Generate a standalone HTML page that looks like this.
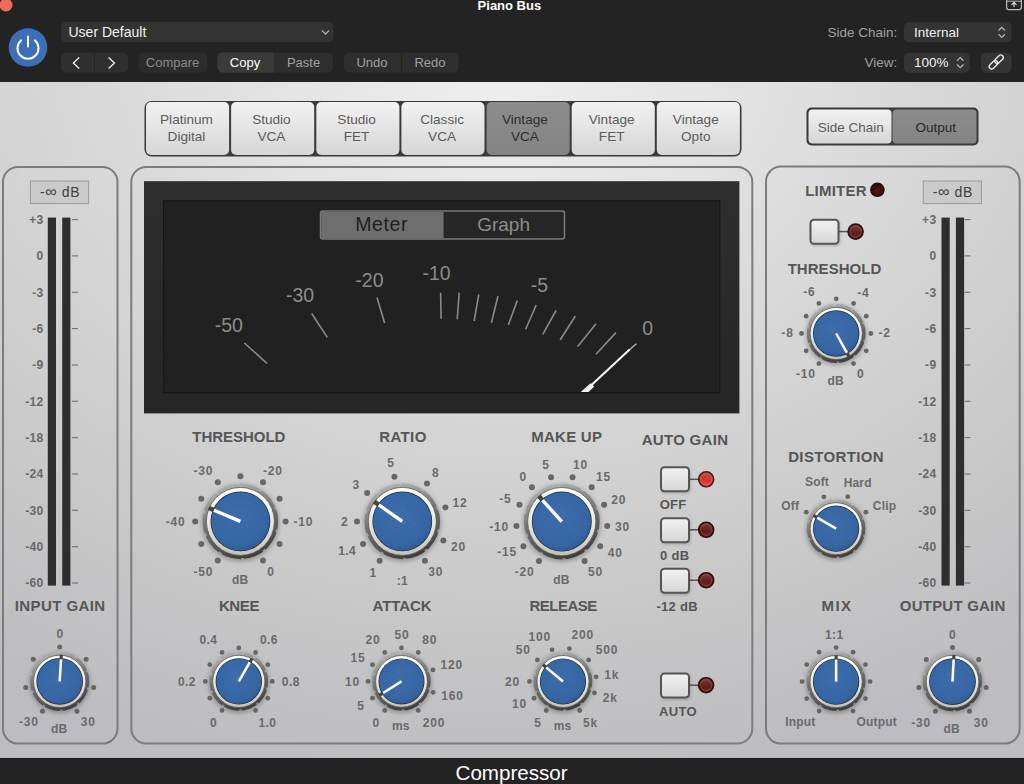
<!DOCTYPE html>
<html><head><meta charset="utf-8"><style>
html,body{margin:0;padding:0;background:#232323;width:1024px;height:784px;overflow:hidden;}
svg{display:block;font-family:"Liberation Sans",sans-serif;}
</style></head><body>
<svg width="1024" height="784" viewBox="0 0 1024 784" font-family="Liberation Sans, sans-serif">
<defs>
<radialGradient id="bgG" gradientUnits="userSpaceOnUse" cx="0" cy="0" r="1" gradientTransform="translate(500 50) scale(920 730)">
 <stop offset="0" stop-color="#f0f0f0"/><stop offset="0.2" stop-color="#e6e6e6"/><stop offset="0.5" stop-color="#d6d6d6"/><stop offset="0.75" stop-color="#c9c9c9"/><stop offset="1" stop-color="#bdbdc1"/>
</radialGradient>
<radialGradient id="blueG" cx="0.45" cy="0.4" r="0.65">
 <stop offset="0" stop-color="#3d6fb0"/><stop offset="0.8" stop-color="#3666a6"/><stop offset="1" stop-color="#2b5490"/>
</radialGradient>
<linearGradient id="ringG" x1="0" y1="0" x2="0" y2="1">
 <stop offset="0" stop-color="#fdfdf8"/><stop offset="0.5" stop-color="#eceade"/><stop offset="1" stop-color="#c4c2b6"/>
</linearGradient>
<linearGradient id="darkRingG" x1="0.3" y1="0" x2="0.6" y2="1">
 <stop offset="0" stop-color="#b4b4b4"/><stop offset="0.45" stop-color="#747474"/><stop offset="1" stop-color="#3c3c3c"/>
</linearGradient>
<filter id="blur2" x="-50%" y="-50%" width="200%" height="200%"><feGaussianBlur stdDeviation="2"/></filter>
<filter id="noise" x="0" y="0" width="100%" height="100%">
 <feTurbulence type="fractalNoise" baseFrequency="0.55" numOctaves="2" seed="3" result="n"/>
 <feColorMatrix in="n" type="matrix" values="0 0 0 0 0.05  0 0 0 0 0.12  0 0 0 0 0.25  0 0 0 -1.2 0.72" result="na"/>
 <feComposite in="na" in2="SourceGraphic" operator="in" result="nc"/>
 <feMerge><feMergeNode in="SourceGraphic"/><feMergeNode in="nc"/></feMerge>
</filter>
<filter id="blur1" x="-50%" y="-50%" width="200%" height="200%"><feGaussianBlur stdDeviation="0.8"/></filter>
<linearGradient id="btnG" x1="0" y1="0" x2="0" y2="1">
 <stop offset="0" stop-color="#f2f2f2"/><stop offset="1" stop-color="#d6d6d6"/>
</linearGradient>
<linearGradient id="btnSelG" x1="0" y1="0" x2="0" y2="1">
 <stop offset="0" stop-color="#8c8c8c"/><stop offset="1" stop-color="#848484"/>
</linearGradient>
<linearGradient id="ledOn" x1="0" y1="0" x2="0" y2="1">
 <stop offset="0" stop-color="#b24440"/><stop offset="0.6" stop-color="#d8362c"/><stop offset="1" stop-color="#e85046"/>
</linearGradient>
<linearGradient id="ledOff" x1="0" y1="0" x2="0" y2="1">
 <stop offset="0" stop-color="#7a3c3a"/><stop offset="0.6" stop-color="#641c1a"/><stop offset="1" stop-color="#6e2422"/>
</linearGradient>
<radialGradient id="ledDark" cx="0.5" cy="0.6" r="0.6">
 <stop offset="0" stop-color="#5a1412"/><stop offset="1" stop-color="#2a0c0c"/>
</radialGradient>
<linearGradient id="dispG" x1="0" y1="0" x2="0" y2="1">
 <stop offset="0" stop-color="#2e2e2e"/><stop offset="1" stop-color="#262626"/>
</linearGradient>
</defs>

<rect x="0" y="82" width="1024" height="676" fill="url(#bgG)"/>
<rect x="0" y="0" width="1024" height="82" fill="#232323"/>
<rect x="0" y="758" width="1024" height="26" fill="#232323"/><rect x="0" y="758" width="1024" height="1" fill="#1a1a1a"/>
<text x="511.6" y="780.3" font-size="20.6" fill="#ffffff" font-weight="normal" text-anchor="middle" letter-spacing="0" >Compressor</text>
<circle cx="6" cy="5" r="6.5" fill="#ec6a5e"/>
<text x="509.4" y="9.8" font-size="13" fill="#ffffff" font-weight="bold" text-anchor="middle" letter-spacing="0" >Piano Bus</text>
<circle cx="28" cy="47.5" r="19.3" fill="#3d6fb8"/>
<path d="M21.2 40.3 A10.5 10.5 0 1 0 34.8 40.3" fill="none" stroke="#fff" stroke-width="2" stroke-linecap="round"/>
<line x1="28" y1="36.5" x2="28" y2="46.5" stroke="#fff" stroke-width="2" stroke-linecap="round"/>
<rect x="61" y="22" width="272.5" height="20" rx="5" fill="#333333"/>
<text x="68.5" y="37.0" font-size="14" fill="#f0f0f0" font-weight="normal" text-anchor="start" letter-spacing="0" >User Default</text>
<path d="M322 30.5 L325.5 34 L329 30.5" fill="none" stroke="#aaa" stroke-width="1.3"/>
<rect x="61" y="52.5" width="67" height="20" rx="5" fill="#2f2f2f"/>
<line x1="94.5" y1="52.5" x2="94.5" y2="72.5" stroke="#242424" stroke-width="1"/>
<path d="M79.2 57.6 L73.4 63.1 L79.2 68.6" fill="none" stroke="#e8e8e8" stroke-width="1.4"/>
<path d="M108.6 57.6 L114.4 63.1 L108.6 68.6" fill="none" stroke="#e8e8e8" stroke-width="1.4"/>
<rect x="138.5" y="52.5" width="68.5" height="20" rx="5" fill="#2c2c2c"/>
<text x="172.5" y="67.0" font-size="13" fill="#8a8a8a" font-weight="normal" text-anchor="middle" letter-spacing="0" >Compare</text>
<rect x="217.5" y="52.5" width="115.5" height="20" rx="5" fill="#2e2e2e"/>
<path d="M222.5 52.5 H274 V72.5 H222.5 A5 5 0 0 1 217.5 67.5 V57.5 A5 5 0 0 1 222.5 52.5Z" fill="#3a3a3a"/>
<text x="245.0" y="67.0" font-size="13" fill="#ffffff" font-weight="normal" text-anchor="middle" letter-spacing="0" >Copy</text>
<text x="303.5" y="67.0" font-size="13" fill="#a0a0a0" font-weight="normal" text-anchor="middle" letter-spacing="0" >Paste</text>
<rect x="344" y="52.5" width="114.5" height="20" rx="5" fill="#2e2e2e"/>
<line x1="401.5" y1="52.5" x2="401.5" y2="72.5" stroke="#242424" stroke-width="1"/>
<text x="372.0" y="67.0" font-size="13" fill="#a0a0a0" font-weight="normal" text-anchor="middle" letter-spacing="0" >Undo</text>
<text x="430.0" y="67.0" font-size="13" fill="#a0a0a0" font-weight="normal" text-anchor="middle" letter-spacing="0" >Redo</text>
<text x="897.3" y="37.0" font-size="13.5" fill="#a0a0a0" font-weight="normal" text-anchor="end" letter-spacing="0" >Side Chain:</text>
<rect x="904" y="22.3" width="107.6" height="20" rx="5" fill="#343434"/>
<text x="914.0" y="37.0" font-size="13.5" fill="#f0f0f0" font-weight="normal" text-anchor="start" letter-spacing="0" >Internal</text>
<path d="M998.5 30.5 L1001.7 27.3 L1005 30.5 M998.5 34.2 L1001.7 37.4 L1005 34.2" fill="none" stroke="#bbb" stroke-width="1.2"/>
<text x="897.3" y="67.0" font-size="13.5" fill="#a0a0a0" font-weight="normal" text-anchor="end" letter-spacing="0" >View:</text>
<rect x="904" y="52.8" width="65.8" height="20" rx="5" fill="#343434"/>
<text x="914.0" y="67.0" font-size="13.5" fill="#f0f0f0" font-weight="normal" text-anchor="start" letter-spacing="0" >100%</text>
<path d="M957 60.8 L960.2 57.6 L963.5 60.8 M957 64.5 L960.2 67.7 L963.5 64.5" fill="none" stroke="#bbb" stroke-width="1.2"/>
<rect x="981" y="52.8" width="30.6" height="20" rx="5" fill="#343434"/>
<g fill="none" stroke="#e8e8e8" stroke-width="1.4"><rect x="988.5" y="62.3" width="10" height="5" rx="2.5" transform="rotate(-45 993.5 64.8)"/><rect x="994" y="56.8" width="10" height="5" rx="2.5" transform="rotate(-45 999 59.3)"/></g>
<rect x="1006.6" y="-3" width="14.8" height="12.6" rx="2" fill="none" stroke="#bbb" stroke-width="1.2"/>
<line x1="1006.6" y1="1.2" x2="1021.4" y2="1.2" stroke="#bbb" stroke-width="1"/>
<path d="M1014 7 V2.5 M1011.5 4.8 L1014 2.3 L1016.5 4.8" fill="none" stroke="#ddd" stroke-width="1.2"/>
<rect x="3" y="167" width="114.5" height="576.6" rx="15" fill="none" stroke="#7c7c7c" stroke-width="2"/>
<rect x="131.3" y="167" width="621" height="576.5" rx="15" fill="none" stroke="#7c7c7c" stroke-width="2"/>
<rect x="766" y="166.6" width="253.7" height="577" rx="15" fill="none" stroke="#7c7c7c" stroke-width="2"/>
<rect x="144.5" y="101" width="597" height="55.5" rx="7" fill="#3a3a3a"/>
<rect x="146.0" y="102" width="83.1" height="53" rx="5" fill="url(#btnG)"/>
<text x="186.5" y="123.7" font-size="13.6" fill="#5c5c5c" font-weight="normal" text-anchor="middle" letter-spacing="0" >Platinum</text>
<text x="186.5" y="141.1" font-size="13.6" fill="#5c5c5c" font-weight="normal" text-anchor="middle" letter-spacing="0" >Digital</text>
<rect x="231.1" y="102" width="83.1" height="53" rx="5" fill="url(#btnG)"/>
<text x="271.4" y="123.7" font-size="13.6" fill="#5c5c5c" font-weight="normal" text-anchor="middle" letter-spacing="0" >Studio</text>
<text x="271.4" y="141.1" font-size="13.6" fill="#5c5c5c" font-weight="normal" text-anchor="middle" letter-spacing="0" >VCA</text>
<rect x="316.3" y="102" width="83.1" height="53" rx="5" fill="url(#btnG)"/>
<text x="356.6" y="123.7" font-size="13.6" fill="#5c5c5c" font-weight="normal" text-anchor="middle" letter-spacing="0" >Studio</text>
<text x="356.6" y="141.1" font-size="13.6" fill="#5c5c5c" font-weight="normal" text-anchor="middle" letter-spacing="0" >FET</text>
<rect x="401.4" y="102" width="83.1" height="53" rx="5" fill="url(#btnG)"/>
<text x="442.1" y="123.7" font-size="13.6" fill="#5c5c5c" font-weight="normal" text-anchor="middle" letter-spacing="0" >Classic</text>
<text x="442.1" y="141.1" font-size="13.6" fill="#5c5c5c" font-weight="normal" text-anchor="middle" letter-spacing="0" >VCA</text>
<rect x="486.6" y="102" width="83.1" height="53" rx="5" fill="url(#btnSelG)"/>
<text x="524.9" y="123.7" font-size="13.6" fill="#2e2e2e" font-weight="normal" text-anchor="middle" letter-spacing="0" >Vintage</text>
<text x="524.9" y="141.1" font-size="13.6" fill="#2e2e2e" font-weight="normal" text-anchor="middle" letter-spacing="0" >VCA</text>
<rect x="571.7" y="102" width="83.1" height="53" rx="5" fill="url(#btnG)"/>
<text x="611.7" y="123.7" font-size="13.6" fill="#5c5c5c" font-weight="normal" text-anchor="middle" letter-spacing="0" >Vintage</text>
<text x="611.7" y="141.1" font-size="13.6" fill="#5c5c5c" font-weight="normal" text-anchor="middle" letter-spacing="0" >FET</text>
<rect x="656.8" y="102" width="83.1" height="53" rx="5" fill="url(#btnG)"/>
<text x="695.8" y="123.7" font-size="13.6" fill="#5c5c5c" font-weight="normal" text-anchor="middle" letter-spacing="0" >Vintage</text>
<text x="695.8" y="141.1" font-size="13.6" fill="#5c5c5c" font-weight="normal" text-anchor="middle" letter-spacing="0" >Opto</text>
<rect x="806.5" y="107.5" width="172" height="38" rx="5" fill="#3a3a3a"/>
<rect x="808.5" y="109.5" width="83" height="34" rx="4" fill="url(#btnG)"/>
<rect x="892.5" y="109.5" width="84" height="34" rx="4" fill="url(#btnSelG)"/>
<text x="850.8" y="132.0" font-size="13.5" fill="#5c5c5c" font-weight="normal" text-anchor="middle" letter-spacing="0" >Side Chain</text>
<text x="935.8" y="132.0" font-size="13.5" fill="#2a2a2a" font-weight="normal" text-anchor="middle" letter-spacing="0" >Output</text>
<rect x="30.4" y="181" width="58.199999999999996" height="22.6" fill="#cacaca" stroke="#9a9a9a" stroke-width="1"/>
<text x="60.1" y="197.0" font-size="14" fill="#3e3e3e" font-weight="normal" text-anchor="middle" letter-spacing="0.6" >-<tspan font-size="16">∞</tspan> dB</text>
<rect x="47.8" y="217.6" width="8.2" height="368" fill="#2e2e2e"/>
<rect x="62.2" y="217.6" width="8.2" height="368" fill="#2e2e2e"/>
<line x1="72" y1="219.6" x2="78" y2="219.6" stroke="#777" stroke-width="1.2"/>
<text x="43.5" y="224.0" font-size="12" fill="#686868" font-weight="bold" text-anchor="end" letter-spacing="0.3" >+3</text>
<line x1="72" y1="255.9" x2="78" y2="255.9" stroke="#777" stroke-width="1.2"/>
<text x="43.5" y="260.3" font-size="12" fill="#686868" font-weight="bold" text-anchor="end" letter-spacing="0.3" >0</text>
<line x1="72" y1="292.3" x2="78" y2="292.3" stroke="#777" stroke-width="1.2"/>
<text x="43.5" y="296.7" font-size="12" fill="#686868" font-weight="bold" text-anchor="end" letter-spacing="0.3" >-3</text>
<line x1="72" y1="328.6" x2="78" y2="328.6" stroke="#777" stroke-width="1.2"/>
<text x="43.5" y="333.0" font-size="12" fill="#686868" font-weight="bold" text-anchor="end" letter-spacing="0.3" >-6</text>
<line x1="72" y1="365.0" x2="78" y2="365.0" stroke="#777" stroke-width="1.2"/>
<text x="43.5" y="369.4" font-size="12" fill="#686868" font-weight="bold" text-anchor="end" letter-spacing="0.3" >-9</text>
<line x1="72" y1="401.3" x2="78" y2="401.3" stroke="#777" stroke-width="1.2"/>
<text x="43.5" y="405.7" font-size="12" fill="#686868" font-weight="bold" text-anchor="end" letter-spacing="0.3" >-12</text>
<line x1="72" y1="437.6" x2="78" y2="437.6" stroke="#777" stroke-width="1.2"/>
<text x="43.5" y="442.0" font-size="12" fill="#686868" font-weight="bold" text-anchor="end" letter-spacing="0.3" >-18</text>
<line x1="72" y1="474.0" x2="78" y2="474.0" stroke="#777" stroke-width="1.2"/>
<text x="43.5" y="478.4" font-size="12" fill="#686868" font-weight="bold" text-anchor="end" letter-spacing="0.3" >-24</text>
<line x1="72" y1="510.3" x2="78" y2="510.3" stroke="#777" stroke-width="1.2"/>
<text x="43.5" y="514.7" font-size="12" fill="#686868" font-weight="bold" text-anchor="end" letter-spacing="0.3" >-30</text>
<line x1="72" y1="546.7" x2="78" y2="546.7" stroke="#777" stroke-width="1.2"/>
<text x="43.5" y="551.1" font-size="12" fill="#686868" font-weight="bold" text-anchor="end" letter-spacing="0.3" >-40</text>
<line x1="72" y1="583.0" x2="78" y2="583.0" stroke="#777" stroke-width="1.2"/>
<text x="43.5" y="587.4" font-size="12" fill="#686868" font-weight="bold" text-anchor="end" letter-spacing="0.3" >-60</text>
<rect x="923.2" y="181" width="58.19999999999993" height="22.6" fill="#cacaca" stroke="#9a9a9a" stroke-width="1"/>
<text x="952.9" y="197.0" font-size="14" fill="#3e3e3e" font-weight="normal" text-anchor="middle" letter-spacing="0.6" >-<tspan font-size="16">∞</tspan> dB</text>
<rect x="941.5" y="217.6" width="8.2" height="368" fill="#2e2e2e"/>
<rect x="955.9" y="217.6" width="8.2" height="368" fill="#2e2e2e"/>
<line x1="964.6" y1="219.6" x2="970.4" y2="219.6" stroke="#777" stroke-width="1.2"/>
<text x="936.4" y="224.0" font-size="12" fill="#686868" font-weight="bold" text-anchor="end" letter-spacing="0.3" >+3</text>
<line x1="964.6" y1="255.9" x2="970.4" y2="255.9" stroke="#777" stroke-width="1.2"/>
<text x="936.4" y="260.3" font-size="12" fill="#686868" font-weight="bold" text-anchor="end" letter-spacing="0.3" >0</text>
<line x1="964.6" y1="292.3" x2="970.4" y2="292.3" stroke="#777" stroke-width="1.2"/>
<text x="936.4" y="296.7" font-size="12" fill="#686868" font-weight="bold" text-anchor="end" letter-spacing="0.3" >-3</text>
<line x1="964.6" y1="328.6" x2="970.4" y2="328.6" stroke="#777" stroke-width="1.2"/>
<text x="936.4" y="333.0" font-size="12" fill="#686868" font-weight="bold" text-anchor="end" letter-spacing="0.3" >-6</text>
<line x1="964.6" y1="365.0" x2="970.4" y2="365.0" stroke="#777" stroke-width="1.2"/>
<text x="936.4" y="369.4" font-size="12" fill="#686868" font-weight="bold" text-anchor="end" letter-spacing="0.3" >-9</text>
<line x1="964.6" y1="401.3" x2="970.4" y2="401.3" stroke="#777" stroke-width="1.2"/>
<text x="936.4" y="405.7" font-size="12" fill="#686868" font-weight="bold" text-anchor="end" letter-spacing="0.3" >-12</text>
<line x1="964.6" y1="437.6" x2="970.4" y2="437.6" stroke="#777" stroke-width="1.2"/>
<text x="936.4" y="442.0" font-size="12" fill="#686868" font-weight="bold" text-anchor="end" letter-spacing="0.3" >-18</text>
<line x1="964.6" y1="474.0" x2="970.4" y2="474.0" stroke="#777" stroke-width="1.2"/>
<text x="936.4" y="478.4" font-size="12" fill="#686868" font-weight="bold" text-anchor="end" letter-spacing="0.3" >-24</text>
<line x1="964.6" y1="510.3" x2="970.4" y2="510.3" stroke="#777" stroke-width="1.2"/>
<text x="936.4" y="514.7" font-size="12" fill="#686868" font-weight="bold" text-anchor="end" letter-spacing="0.3" >-30</text>
<line x1="964.6" y1="546.7" x2="970.4" y2="546.7" stroke="#777" stroke-width="1.2"/>
<text x="936.4" y="551.1" font-size="12" fill="#686868" font-weight="bold" text-anchor="end" letter-spacing="0.3" >-40</text>
<line x1="964.6" y1="583.0" x2="970.4" y2="583.0" stroke="#777" stroke-width="1.2"/>
<text x="936.4" y="587.4" font-size="12" fill="#686868" font-weight="bold" text-anchor="end" letter-spacing="0.3" >-60</text>
<text x="60.2" y="611.4" font-size="15" fill="#565656" font-weight="bold" text-anchor="middle" letter-spacing="0.41" >INPUT GAIN</text>
<text x="238.9" y="442.4" font-size="15" fill="#565656" font-weight="bold" text-anchor="middle" letter-spacing="-0.03" >THRESHOLD</text>
<text x="403.0" y="442.4" font-size="15" fill="#565656" font-weight="bold" text-anchor="middle" letter-spacing="0.35" >RATIO</text>
<text x="566.7" y="441.8" font-size="15" fill="#565656" font-weight="bold" text-anchor="middle" letter-spacing="0.25" >MAKE UP</text>
<text x="685.0" y="444.7" font-size="15" fill="#565656" font-weight="bold" text-anchor="middle" letter-spacing="0.31" >AUTO GAIN</text>
<text x="239.0" y="611.2" font-size="15" fill="#565656" font-weight="bold" text-anchor="middle" letter-spacing="-0.38" >KNEE</text>
<text x="402.0" y="611.2" font-size="15" fill="#565656" font-weight="bold" text-anchor="middle" letter-spacing="-0.07" >ATTACK</text>
<text x="563.2" y="611.2" font-size="15" fill="#565656" font-weight="bold" text-anchor="middle" letter-spacing="-0.5" >RELEASE</text>
<text x="834.5" y="274.0" font-size="15" fill="#565656" font-weight="bold" text-anchor="middle" letter-spacing="0.04" >THRESHOLD</text>
<text x="836.1" y="462.1" font-size="15" fill="#565656" font-weight="bold" text-anchor="middle" letter-spacing="0.36" >DISTORTION</text>
<text x="837.0" y="611.2" font-size="15" fill="#565656" font-weight="bold" text-anchor="middle" letter-spacing="1.5" >MIX</text>
<text x="952.7" y="611.2" font-size="15" fill="#565656" font-weight="bold" text-anchor="middle" letter-spacing="0.22" >OUTPUT GAIN</text>
<text x="836.0" y="196.0" font-size="15" fill="#565656" font-weight="bold" text-anchor="middle" letter-spacing="0.25" >LIMITER</text>
<circle cx="42.45" cy="711.28" r="2.5" fill="#676767"/>
<circle cx="25.72" cy="687.39" r="2.5" fill="#676767"/>
<circle cx="33.27" cy="659.22" r="2.5" fill="#676767"/>
<circle cx="59.70" cy="646.90" r="2.5" fill="#676767"/>
<circle cx="86.13" cy="659.22" r="2.5" fill="#676767"/>
<circle cx="93.68" cy="687.39" r="2.5" fill="#676767"/>
<circle cx="76.95" cy="711.28" r="2.5" fill="#676767"/>
<circle cx="59.7" cy="682.9" r="30.5" fill="#3a3a3a" opacity="0.35" filter="url(#blur2)"/>
<circle cx="59.7" cy="681.4" r="29.5" fill="url(#darkRingG)"/>
<circle cx="59.7" cy="681.4" r="28.90" fill="none" stroke="#c8c8c8" stroke-opacity="0.55" stroke-width="1.4" stroke-dasharray="2.54 15.62" transform="rotate(12 59.7 681.4)"/>
<circle cx="59.7" cy="681.4" r="26.200000000000003" fill="url(#ringG)" stroke="#5a5a5a" stroke-width="0.8"/>
<circle cx="59.7" cy="681.4" r="23.3" fill="#1a2c48"/>
<circle cx="59.7" cy="681.4" r="22.6" fill="url(#blueG)" filter="url(#noise)"/>
<line x1="59.70" y1="681.40" x2="61.08" y2="658.84" stroke="#ffffff" stroke-width="2.5"/>
<line x1="61.05" y1="659.34" x2="61.32" y2="654.95" stroke="#444444" stroke-width="3.2"/>
<text x="60.2" y="638.1" font-size="12" fill="#6a6a6a" font-weight="bold" text-anchor="middle" letter-spacing="0.8" >0</text>
<text x="28.9" y="726.1" font-size="12" fill="#6a6a6a" font-weight="bold" text-anchor="middle" letter-spacing="0.8" >-30</text>
<text x="59.3" y="733.1" font-size="12" fill="#6a6a6a" font-weight="bold" text-anchor="middle" letter-spacing="0.2" >dB</text>
<text x="88.3" y="726.1" font-size="12" fill="#6a6a6a" font-weight="bold" text-anchor="middle" letter-spacing="0.8" >30</text>
<circle cx="217.80" cy="560.54" r="3" fill="#676767"/>
<circle cx="201.26" cy="544.00" r="3" fill="#676767"/>
<circle cx="195.20" cy="521.40" r="3" fill="#676767"/>
<circle cx="201.26" cy="498.80" r="3" fill="#676767"/>
<circle cx="217.80" cy="482.26" r="3" fill="#676767"/>
<circle cx="240.40" cy="476.20" r="3" fill="#676767"/>
<circle cx="263.00" cy="482.26" r="3" fill="#676767"/>
<circle cx="279.54" cy="498.80" r="3" fill="#676767"/>
<circle cx="285.60" cy="521.40" r="3" fill="#676767"/>
<circle cx="279.54" cy="544.00" r="3" fill="#676767"/>
<circle cx="263.00" cy="560.54" r="3" fill="#676767"/>
<circle cx="240.4" cy="522.9" r="38.8" fill="#3a3a3a" opacity="0.35" filter="url(#blur2)"/>
<circle cx="240.4" cy="521.4" r="37.8" fill="url(#darkRingG)"/>
<circle cx="240.4" cy="521.4" r="37.20" fill="none" stroke="#c8c8c8" stroke-opacity="0.55" stroke-width="1.4" stroke-dasharray="3.27 20.10" transform="rotate(12 240.4 521.4)"/>
<circle cx="240.4" cy="521.4" r="34.0" fill="url(#ringG)" stroke="#5a5a5a" stroke-width="0.8"/>
<circle cx="240.4" cy="521.4" r="29.9" fill="#1a2c48"/>
<circle cx="240.4" cy="521.4" r="29.2" fill="url(#blueG)" filter="url(#noise)"/>
<line x1="240.40" y1="521.40" x2="213.52" y2="509.99" stroke="#ffffff" stroke-width="3.4"/>
<line x1="213.98" y1="510.19" x2="208.83" y2="508.00" stroke="#444444" stroke-width="4.6"/>
<text x="203.3" y="474.8" font-size="12" fill="#6a6a6a" font-weight="bold" text-anchor="middle" letter-spacing="0.8" >-30</text>
<text x="272.9" y="474.8" font-size="12" fill="#6a6a6a" font-weight="bold" text-anchor="middle" letter-spacing="0.8" >-20</text>
<text x="175.6" y="526.1" font-size="12" fill="#6a6a6a" font-weight="bold" text-anchor="middle" letter-spacing="0.8" >-40</text>
<text x="303.3" y="526.1" font-size="12" fill="#6a6a6a" font-weight="bold" text-anchor="middle" letter-spacing="0.8" >-10</text>
<text x="203.3" y="576.1" font-size="12" fill="#6a6a6a" font-weight="bold" text-anchor="middle" letter-spacing="0.8" >-50</text>
<text x="271.1" y="576.1" font-size="12" fill="#6a6a6a" font-weight="bold" text-anchor="middle" letter-spacing="0.8" >0</text>
<text x="240.1" y="584.1" font-size="12" fill="#6a6a6a" font-weight="bold" text-anchor="middle" letter-spacing="0.2" >dB</text>
<circle cx="379.65" cy="560.63" r="3" fill="#676767"/>
<circle cx="363.07" cy="544.05" r="3" fill="#676767"/>
<circle cx="357.00" cy="521.40" r="3" fill="#676767"/>
<circle cx="367.10" cy="492.89" r="3" fill="#676767"/>
<circle cx="394.43" cy="476.79" r="3" fill="#676767"/>
<circle cx="426.97" cy="483.41" r="3" fill="#676767"/>
<circle cx="445.38" cy="507.40" r="3" fill="#676767"/>
<circle cx="443.36" cy="540.54" r="3" fill="#676767"/>
<circle cx="424.95" cy="560.63" r="3" fill="#676767"/>
<circle cx="402.3" cy="522.9" r="38.8" fill="#3a3a3a" opacity="0.35" filter="url(#blur2)"/>
<circle cx="402.3" cy="521.4" r="37.8" fill="url(#darkRingG)"/>
<circle cx="402.3" cy="521.4" r="37.20" fill="none" stroke="#c8c8c8" stroke-opacity="0.55" stroke-width="1.4" stroke-dasharray="3.27 20.10" transform="rotate(12 402.3 521.4)"/>
<circle cx="402.3" cy="521.4" r="34.0" fill="url(#ringG)" stroke="#5a5a5a" stroke-width="0.8"/>
<circle cx="402.3" cy="521.4" r="29.9" fill="#1a2c48"/>
<circle cx="402.3" cy="521.4" r="29.2" fill="url(#blueG)" filter="url(#noise)"/>
<line x1="402.30" y1="521.40" x2="378.38" y2="504.65" stroke="#ffffff" stroke-width="3.4"/>
<line x1="378.79" y1="504.94" x2="374.20" y2="501.73" stroke="#444444" stroke-width="4.6"/>
<text x="373.3" y="576.6" font-size="12" fill="#6a6a6a" font-weight="bold" text-anchor="middle" letter-spacing="0.8" >1</text>
<text x="347.2" y="555.2" font-size="12" fill="#6a6a6a" font-weight="bold" text-anchor="middle" letter-spacing="0.4" >1.4</text>
<text x="344.7" y="525.7" font-size="12" fill="#6a6a6a" font-weight="bold" text-anchor="middle" letter-spacing="0.8" >2</text>
<text x="356.3" y="489.1" font-size="12" fill="#6a6a6a" font-weight="bold" text-anchor="middle" letter-spacing="0.8" >3</text>
<text x="391.1" y="467.2" font-size="12" fill="#6a6a6a" font-weight="bold" text-anchor="middle" letter-spacing="0.8" >5</text>
<text x="435.8" y="477.2" font-size="12" fill="#6a6a6a" font-weight="bold" text-anchor="middle" letter-spacing="0.8" >8</text>
<text x="459.9" y="507.0" font-size="12" fill="#6a6a6a" font-weight="bold" text-anchor="middle" letter-spacing="0.8" >12</text>
<text x="458.6" y="550.7" font-size="12" fill="#6a6a6a" font-weight="bold" text-anchor="middle" letter-spacing="0.8" >20</text>
<text x="435.8" y="575.7" font-size="12" fill="#6a6a6a" font-weight="bold" text-anchor="middle" letter-spacing="0.8" >30</text>
<text x="402.4" y="584.7" font-size="12" fill="#6a6a6a" font-weight="bold" text-anchor="middle" letter-spacing="0.2" >:1</text>
<circle cx="539.00" cy="561.09" r="3" fill="#676767"/>
<circle cx="523.44" cy="546.25" r="3" fill="#676767"/>
<circle cx="516.41" cy="525.93" r="3" fill="#676767"/>
<circle cx="519.47" cy="504.65" r="3" fill="#676767"/>
<circle cx="531.94" cy="487.14" r="3" fill="#676767"/>
<circle cx="551.05" cy="477.29" r="3" fill="#676767"/>
<circle cx="572.55" cy="477.29" r="3" fill="#676767"/>
<circle cx="591.66" cy="487.14" r="3" fill="#676767"/>
<circle cx="604.13" cy="504.65" r="3" fill="#676767"/>
<circle cx="607.19" cy="525.93" r="3" fill="#676767"/>
<circle cx="600.16" cy="546.25" r="3" fill="#676767"/>
<circle cx="584.60" cy="561.09" r="3" fill="#676767"/>
<circle cx="561.8" cy="523.1" r="38.9" fill="#3a3a3a" opacity="0.35" filter="url(#blur2)"/>
<circle cx="561.8" cy="521.6" r="37.9" fill="url(#darkRingG)"/>
<circle cx="561.8" cy="521.6" r="37.30" fill="none" stroke="#c8c8c8" stroke-opacity="0.55" stroke-width="1.4" stroke-dasharray="3.28 20.16" transform="rotate(12 561.8 521.6)"/>
<circle cx="561.8" cy="521.6" r="34.1" fill="url(#ringG)" stroke="#5a5a5a" stroke-width="0.8"/>
<circle cx="561.8" cy="521.6" r="30.0" fill="#1a2c48"/>
<circle cx="561.8" cy="521.6" r="29.3" fill="url(#blueG)" filter="url(#noise)"/>
<line x1="561.80" y1="521.60" x2="542.19" y2="499.83" stroke="#ffffff" stroke-width="3.4"/>
<line x1="542.53" y1="500.20" x2="538.78" y2="496.04" stroke="#444444" stroke-width="4.6"/>
<text x="524.7" y="575.7" font-size="12" fill="#6a6a6a" font-weight="bold" text-anchor="middle" letter-spacing="0.8" >-20</text>
<text x="507.2" y="556.4" font-size="12" fill="#6a6a6a" font-weight="bold" text-anchor="middle" letter-spacing="0.8" >-15</text>
<text x="499.1" y="531.4" font-size="12" fill="#6a6a6a" font-weight="bold" text-anchor="middle" letter-spacing="0.8" >-10</text>
<text x="505.4" y="503.4" font-size="12" fill="#6a6a6a" font-weight="bold" text-anchor="middle" letter-spacing="0.8" >-5</text>
<text x="523.3" y="481.4" font-size="12" fill="#6a6a6a" font-weight="bold" text-anchor="middle" letter-spacing="0.8" >0</text>
<text x="546.1" y="468.6" font-size="12" fill="#6a6a6a" font-weight="bold" text-anchor="middle" letter-spacing="0.8" >5</text>
<text x="580.4" y="468.6" font-size="12" fill="#6a6a6a" font-weight="bold" text-anchor="middle" letter-spacing="0.8" >10</text>
<text x="603.6" y="481.4" font-size="12" fill="#6a6a6a" font-weight="bold" text-anchor="middle" letter-spacing="0.8" >15</text>
<text x="618.8" y="504.3" font-size="12" fill="#6a6a6a" font-weight="bold" text-anchor="middle" letter-spacing="0.8" >20</text>
<text x="622.4" y="531.4" font-size="12" fill="#6a6a6a" font-weight="bold" text-anchor="middle" letter-spacing="0.8" >30</text>
<text x="615.2" y="557.0" font-size="12" fill="#6a6a6a" font-weight="bold" text-anchor="middle" letter-spacing="0.8" >40</text>
<text x="595.6" y="575.7" font-size="12" fill="#6a6a6a" font-weight="bold" text-anchor="middle" letter-spacing="0.8" >50</text>
<text x="561.4" y="584.1" font-size="12" fill="#6a6a6a" font-weight="bold" text-anchor="middle" letter-spacing="0.2" >dB</text>
<circle cx="222.05" cy="710.41" r="2.4" fill="#676767"/>
<circle cx="209.79" cy="698.15" r="2.4" fill="#676767"/>
<circle cx="205.30" cy="681.40" r="2.4" fill="#676767"/>
<circle cx="209.79" cy="664.65" r="2.4" fill="#676767"/>
<circle cx="222.05" cy="652.39" r="2.4" fill="#676767"/>
<circle cx="238.80" cy="647.90" r="2.4" fill="#676767"/>
<circle cx="255.55" cy="652.39" r="2.4" fill="#676767"/>
<circle cx="267.81" cy="664.65" r="2.4" fill="#676767"/>
<circle cx="272.30" cy="681.40" r="2.4" fill="#676767"/>
<circle cx="267.81" cy="698.15" r="2.4" fill="#676767"/>
<circle cx="255.55" cy="710.41" r="2.4" fill="#676767"/>
<circle cx="238.8" cy="682.9" r="30.4" fill="#3a3a3a" opacity="0.35" filter="url(#blur2)"/>
<circle cx="238.8" cy="681.4" r="29.4" fill="url(#darkRingG)"/>
<circle cx="238.8" cy="681.4" r="28.80" fill="none" stroke="#c8c8c8" stroke-opacity="0.55" stroke-width="1.4" stroke-dasharray="2.53 15.56" transform="rotate(12 238.8 681.4)"/>
<circle cx="238.8" cy="681.4" r="26.1" fill="url(#ringG)" stroke="#5a5a5a" stroke-width="0.8"/>
<circle cx="238.8" cy="681.4" r="23.2" fill="#1a2c48"/>
<circle cx="238.8" cy="681.4" r="22.5" fill="url(#blueG)" filter="url(#noise)"/>
<line x1="238.80" y1="681.40" x2="250.05" y2="661.91" stroke="#ffffff" stroke-width="2.5"/>
<line x1="249.80" y1="662.35" x2="252.00" y2="658.54" stroke="#444444" stroke-width="3.2"/>
<text x="208.4" y="644.2" font-size="12" fill="#6a6a6a" font-weight="bold" text-anchor="middle" letter-spacing="0.4" >0.4</text>
<text x="268.9" y="644.2" font-size="12" fill="#6a6a6a" font-weight="bold" text-anchor="middle" letter-spacing="0.4" >0.6</text>
<text x="187.0" y="686.3" font-size="12" fill="#6a6a6a" font-weight="bold" text-anchor="middle" letter-spacing="0.4" >0.2</text>
<text x="290.8" y="686.3" font-size="12" fill="#6a6a6a" font-weight="bold" text-anchor="middle" letter-spacing="0.4" >0.8</text>
<text x="213.7" y="726.5" font-size="12" fill="#6a6a6a" font-weight="bold" text-anchor="middle" letter-spacing="0.8" >0</text>
<text x="267.4" y="726.5" font-size="12" fill="#6a6a6a" font-weight="bold" text-anchor="middle" letter-spacing="0.4" >1.0</text>
<circle cx="384.75" cy="710.41" r="2.4" fill="#676767"/>
<circle cx="372.49" cy="698.15" r="2.4" fill="#676767"/>
<circle cx="368.00" cy="681.40" r="2.4" fill="#676767"/>
<circle cx="372.49" cy="664.65" r="2.4" fill="#676767"/>
<circle cx="384.75" cy="652.39" r="2.4" fill="#676767"/>
<circle cx="401.50" cy="647.90" r="2.4" fill="#676767"/>
<circle cx="418.25" cy="652.39" r="2.4" fill="#676767"/>
<circle cx="432.98" cy="669.94" r="2.4" fill="#676767"/>
<circle cx="433.17" cy="692.31" r="2.4" fill="#676767"/>
<circle cx="418.25" cy="710.41" r="2.4" fill="#676767"/>
<circle cx="401.5" cy="682.9" r="30.200000000000003" fill="#3a3a3a" opacity="0.35" filter="url(#blur2)"/>
<circle cx="401.5" cy="681.4" r="29.200000000000003" fill="url(#darkRingG)"/>
<circle cx="401.5" cy="681.4" r="28.60" fill="none" stroke="#c8c8c8" stroke-opacity="0.55" stroke-width="1.4" stroke-dasharray="2.52 15.45" transform="rotate(12 401.5 681.4)"/>
<circle cx="401.5" cy="681.4" r="25.900000000000002" fill="url(#ringG)" stroke="#5a5a5a" stroke-width="0.8"/>
<circle cx="401.5" cy="681.4" r="23.0" fill="#1a2c48"/>
<circle cx="401.5" cy="681.4" r="22.3" fill="url(#blueG)" filter="url(#noise)"/>
<line x1="401.50" y1="681.40" x2="382.59" y2="693.22" stroke="#ffffff" stroke-width="2.5"/>
<line x1="383.01" y1="692.95" x2="379.28" y2="695.28" stroke="#444444" stroke-width="3.2"/>
<text x="372.9" y="644.2" font-size="12" fill="#6a6a6a" font-weight="bold" text-anchor="middle" letter-spacing="0.8" >20</text>
<text x="401.9" y="638.8" font-size="12" fill="#6a6a6a" font-weight="bold" text-anchor="middle" letter-spacing="0.8" >50</text>
<text x="429.8" y="644.2" font-size="12" fill="#6a6a6a" font-weight="bold" text-anchor="middle" letter-spacing="0.8" >80</text>
<text x="357.9" y="662.2" font-size="12" fill="#6a6a6a" font-weight="bold" text-anchor="middle" letter-spacing="0.8" >15</text>
<text x="451.7" y="668.7" font-size="12" fill="#6a6a6a" font-weight="bold" text-anchor="middle" letter-spacing="0.8" >120</text>
<text x="352.6" y="686.3" font-size="12" fill="#6a6a6a" font-weight="bold" text-anchor="middle" letter-spacing="0.8" >10</text>
<text x="452.4" y="700.3" font-size="12" fill="#6a6a6a" font-weight="bold" text-anchor="middle" letter-spacing="0.8" >160</text>
<text x="361.0" y="709.7" font-size="12" fill="#6a6a6a" font-weight="bold" text-anchor="middle" letter-spacing="0.8" >5</text>
<text x="376.3" y="726.5" font-size="12" fill="#6a6a6a" font-weight="bold" text-anchor="middle" letter-spacing="0.8" >0</text>
<text x="434.0" y="726.5" font-size="12" fill="#6a6a6a" font-weight="bold" text-anchor="middle" letter-spacing="0.8" >200</text>
<text x="400.8" y="730.2" font-size="12" fill="#6a6a6a" font-weight="bold" text-anchor="middle" letter-spacing="0.2" >ms</text>
<circle cx="546.25" cy="710.51" r="2.4" fill="#676767"/>
<circle cx="533.99" cy="698.25" r="2.4" fill="#676767"/>
<circle cx="529.50" cy="681.50" r="2.4" fill="#676767"/>
<circle cx="537.34" cy="659.97" r="2.4" fill="#676767"/>
<circle cx="552.09" cy="649.83" r="2.4" fill="#676767"/>
<circle cx="569.39" cy="648.62" r="2.4" fill="#676767"/>
<circle cx="588.66" cy="659.97" r="2.4" fill="#676767"/>
<circle cx="596.17" cy="676.84" r="2.4" fill="#676767"/>
<circle cx="594.48" cy="692.96" r="2.4" fill="#676767"/>
<circle cx="579.75" cy="710.51" r="2.4" fill="#676767"/>
<circle cx="563" cy="683.0" r="30.299999999999997" fill="#3a3a3a" opacity="0.35" filter="url(#blur2)"/>
<circle cx="563" cy="681.5" r="29.299999999999997" fill="url(#darkRingG)"/>
<circle cx="563" cy="681.5" r="28.70" fill="none" stroke="#c8c8c8" stroke-opacity="0.55" stroke-width="1.4" stroke-dasharray="2.52 15.51" transform="rotate(12 563 681.5)"/>
<circle cx="563" cy="681.5" r="26.0" fill="url(#ringG)" stroke="#5a5a5a" stroke-width="0.8"/>
<circle cx="563" cy="681.5" r="23.099999999999998" fill="#1a2c48"/>
<circle cx="563" cy="681.5" r="22.4" fill="url(#blueG)" filter="url(#noise)"/>
<line x1="563.00" y1="681.50" x2="545.84" y2="667.10" stroke="#ffffff" stroke-width="2.5"/>
<line x1="546.22" y1="667.42" x2="542.85" y2="664.59" stroke="#444444" stroke-width="3.2"/>
<text x="539.7" y="640.8" font-size="12" fill="#6a6a6a" font-weight="bold" text-anchor="middle" letter-spacing="0.8" >100</text>
<text x="582.7" y="638.8" font-size="12" fill="#6a6a6a" font-weight="bold" text-anchor="middle" letter-spacing="0.8" >200</text>
<text x="523.3" y="654.1" font-size="12" fill="#6a6a6a" font-weight="bold" text-anchor="middle" letter-spacing="0.8" >50</text>
<text x="607.0" y="654.1" font-size="12" fill="#6a6a6a" font-weight="bold" text-anchor="middle" letter-spacing="0.8" >500</text>
<text x="512.6" y="685.8" font-size="12" fill="#6a6a6a" font-weight="bold" text-anchor="middle" letter-spacing="0.8" >20</text>
<text x="611.7" y="679.4" font-size="12" fill="#6a6a6a" font-weight="bold" text-anchor="middle" letter-spacing="0.8" >1k</text>
<text x="610.2" y="702.3" font-size="12" fill="#6a6a6a" font-weight="bold" text-anchor="middle" letter-spacing="0.8" >2k</text>
<text x="519.5" y="708.1" font-size="12" fill="#6a6a6a" font-weight="bold" text-anchor="middle" letter-spacing="0.8" >10</text>
<text x="538.1" y="726.8" font-size="12" fill="#6a6a6a" font-weight="bold" text-anchor="middle" letter-spacing="0.8" >5</text>
<text x="562.5" y="729.7" font-size="12" fill="#6a6a6a" font-weight="bold" text-anchor="middle" letter-spacing="0.2" >ms</text>
<text x="590.6" y="727.3" font-size="12" fill="#6a6a6a" font-weight="bold" text-anchor="middle" letter-spacing="0.8" >5k</text>
<circle cx="818.85" cy="363.55" r="2.4" fill="#676767"/>
<circle cx="806.15" cy="350.85" r="2.4" fill="#676767"/>
<circle cx="801.50" cy="333.50" r="2.4" fill="#676767"/>
<circle cx="806.15" cy="316.15" r="2.4" fill="#676767"/>
<circle cx="818.85" cy="303.45" r="2.4" fill="#676767"/>
<circle cx="836.20" cy="298.80" r="2.4" fill="#676767"/>
<circle cx="853.55" cy="303.45" r="2.4" fill="#676767"/>
<circle cx="866.25" cy="316.15" r="2.4" fill="#676767"/>
<circle cx="870.90" cy="333.50" r="2.4" fill="#676767"/>
<circle cx="866.25" cy="350.85" r="2.4" fill="#676767"/>
<circle cx="853.55" cy="363.55" r="2.4" fill="#676767"/>
<circle cx="836.2" cy="335.0" r="30.4" fill="#3a3a3a" opacity="0.35" filter="url(#blur2)"/>
<circle cx="836.2" cy="333.5" r="29.4" fill="url(#darkRingG)"/>
<circle cx="836.2" cy="333.5" r="28.80" fill="none" stroke="#c8c8c8" stroke-opacity="0.55" stroke-width="1.4" stroke-dasharray="2.53 15.56" transform="rotate(12 836.2 333.5)"/>
<circle cx="836.2" cy="333.5" r="26.1" fill="url(#ringG)" stroke="#5a5a5a" stroke-width="0.8"/>
<circle cx="836.2" cy="333.5" r="23.2" fill="#1a2c48"/>
<circle cx="836.2" cy="333.5" r="22.5" fill="url(#blueG)" filter="url(#noise)"/>
<line x1="836.20" y1="333.50" x2="847.11" y2="353.18" stroke="#ffffff" stroke-width="2.5"/>
<line x1="846.87" y1="352.74" x2="849.00" y2="356.59" stroke="#444444" stroke-width="3.2"/>
<text x="809.3" y="296.3" font-size="12" fill="#6a6a6a" font-weight="bold" text-anchor="middle" letter-spacing="0.8" >-6</text>
<text x="863.3" y="297.2" font-size="12" fill="#6a6a6a" font-weight="bold" text-anchor="middle" letter-spacing="0.8" >-4</text>
<text x="787.5" y="337.3" font-size="12" fill="#6a6a6a" font-weight="bold" text-anchor="middle" letter-spacing="0.8" >-8</text>
<text x="884.7" y="337.3" font-size="12" fill="#6a6a6a" font-weight="bold" text-anchor="middle" letter-spacing="0.8" >-2</text>
<text x="805.8" y="377.5" font-size="12" fill="#6a6a6a" font-weight="bold" text-anchor="middle" letter-spacing="0.8" >-10</text>
<text x="835.8" y="384.7" font-size="12" fill="#6a6a6a" font-weight="bold" text-anchor="middle" letter-spacing="0.2" >dB</text>
<text x="860.8" y="377.5" font-size="12" fill="#6a6a6a" font-weight="bold" text-anchor="middle" letter-spacing="0.8" >0</text>
<circle cx="806.28" cy="512.17" r="2.4" fill="#676767"/>
<circle cx="823.88" cy="496.86" r="2.4" fill="#676767"/>
<circle cx="847.76" cy="496.66" r="2.4" fill="#676767"/>
<circle cx="865.92" cy="512.17" r="2.4" fill="#676767"/>
<circle cx="836.1" cy="530.2" r="30.299999999999997" fill="#3a3a3a" opacity="0.35" filter="url(#blur2)"/>
<circle cx="836.1" cy="528.7" r="29.299999999999997" fill="url(#darkRingG)"/>
<circle cx="836.1" cy="528.7" r="28.70" fill="none" stroke="#c8c8c8" stroke-opacity="0.55" stroke-width="1.4" stroke-dasharray="2.52 15.51" transform="rotate(12 836.1 528.7)"/>
<circle cx="836.1" cy="528.7" r="26.0" fill="url(#ringG)" stroke="#5a5a5a" stroke-width="0.8"/>
<circle cx="836.1" cy="528.7" r="23.099999999999998" fill="#1a2c48"/>
<circle cx="836.1" cy="528.7" r="22.4" fill="url(#blueG)" filter="url(#noise)"/>
<line x1="836.10" y1="528.70" x2="816.80" y2="517.33" stroke="#ffffff" stroke-width="2.5"/>
<line x1="817.23" y1="517.58" x2="813.44" y2="515.35" stroke="#444444" stroke-width="3.2"/>
<text x="790.3" y="509.5" font-size="12" fill="#6a6a6a" font-weight="bold" text-anchor="middle" letter-spacing="0.2" >Off</text>
<text x="817.0" y="485.8" font-size="12" fill="#6a6a6a" font-weight="bold" text-anchor="middle" letter-spacing="0.2" >Soft</text>
<text x="857.7" y="486.6" font-size="12" fill="#6a6a6a" font-weight="bold" text-anchor="middle" letter-spacing="0.2" >Hard</text>
<text x="884.5" y="509.5" font-size="12" fill="#6a6a6a" font-weight="bold" text-anchor="middle" letter-spacing="0.2" >Clip</text>
<circle cx="819.10" cy="711.04" r="2.4" fill="#676767"/>
<circle cx="806.66" cy="698.60" r="2.4" fill="#676767"/>
<circle cx="802.10" cy="681.60" r="2.4" fill="#676767"/>
<circle cx="806.66" cy="664.60" r="2.4" fill="#676767"/>
<circle cx="819.10" cy="652.16" r="2.4" fill="#676767"/>
<circle cx="836.10" cy="647.60" r="2.4" fill="#676767"/>
<circle cx="853.10" cy="652.16" r="2.4" fill="#676767"/>
<circle cx="865.54" cy="664.60" r="2.4" fill="#676767"/>
<circle cx="870.10" cy="681.60" r="2.4" fill="#676767"/>
<circle cx="865.54" cy="698.60" r="2.4" fill="#676767"/>
<circle cx="853.10" cy="711.04" r="2.4" fill="#676767"/>
<circle cx="836.1" cy="683.1" r="30.4" fill="#3a3a3a" opacity="0.35" filter="url(#blur2)"/>
<circle cx="836.1" cy="681.6" r="29.4" fill="url(#darkRingG)"/>
<circle cx="836.1" cy="681.6" r="28.80" fill="none" stroke="#c8c8c8" stroke-opacity="0.55" stroke-width="1.4" stroke-dasharray="2.53 15.56" transform="rotate(12 836.1 681.6)"/>
<circle cx="836.1" cy="681.6" r="26.1" fill="url(#ringG)" stroke="#5a5a5a" stroke-width="0.8"/>
<circle cx="836.1" cy="681.6" r="23.2" fill="#1a2c48"/>
<circle cx="836.1" cy="681.6" r="22.5" fill="url(#blueG)" filter="url(#noise)"/>
<line x1="836.10" y1="681.60" x2="836.10" y2="659.10" stroke="#ffffff" stroke-width="2.5"/>
<line x1="836.10" y1="659.60" x2="836.10" y2="655.20" stroke="#444444" stroke-width="3.2"/>
<text x="834.2" y="638.5" font-size="12" fill="#6a6a6a" font-weight="bold" text-anchor="middle" letter-spacing="0.4" >1:1</text>
<text x="800.4" y="725.9" font-size="12" fill="#6a6a6a" font-weight="bold" text-anchor="middle" letter-spacing="0.2" >Input</text>
<text x="876.8" y="725.9" font-size="12" fill="#6a6a6a" font-weight="bold" text-anchor="middle" letter-spacing="0.2" >Output</text>
<circle cx="935.40" cy="711.22" r="2.5" fill="#676767"/>
<circle cx="918.82" cy="687.54" r="2.5" fill="#676767"/>
<circle cx="926.30" cy="659.62" r="2.5" fill="#676767"/>
<circle cx="952.50" cy="647.40" r="2.5" fill="#676767"/>
<circle cx="978.70" cy="659.62" r="2.5" fill="#676767"/>
<circle cx="986.18" cy="687.54" r="2.5" fill="#676767"/>
<circle cx="969.60" cy="711.22" r="2.5" fill="#676767"/>
<circle cx="952.5" cy="683.1" r="30.6" fill="#3a3a3a" opacity="0.35" filter="url(#blur2)"/>
<circle cx="952.5" cy="681.6" r="29.6" fill="url(#darkRingG)"/>
<circle cx="952.5" cy="681.6" r="29.00" fill="none" stroke="#c8c8c8" stroke-opacity="0.55" stroke-width="1.4" stroke-dasharray="2.55 15.67" transform="rotate(12 952.5 681.6)"/>
<circle cx="952.5" cy="681.6" r="26.3" fill="url(#ringG)" stroke="#5a5a5a" stroke-width="0.8"/>
<circle cx="952.5" cy="681.6" r="23.4" fill="#1a2c48"/>
<circle cx="952.5" cy="681.6" r="22.7" fill="url(#blueG)" filter="url(#noise)"/>
<line x1="952.50" y1="681.60" x2="953.69" y2="658.93" stroke="#ffffff" stroke-width="2.5"/>
<line x1="953.66" y1="659.43" x2="953.89" y2="655.04" stroke="#444444" stroke-width="3.2"/>
<text x="952.8" y="638.5" font-size="12" fill="#6a6a6a" font-weight="bold" text-anchor="middle" letter-spacing="0.8" >0</text>
<text x="921.0" y="727.1" font-size="12" fill="#6a6a6a" font-weight="bold" text-anchor="middle" letter-spacing="0.8" >-30</text>
<text x="981.3" y="727.1" font-size="12" fill="#6a6a6a" font-weight="bold" text-anchor="middle" letter-spacing="0.8" >30</text>
<text x="951.7" y="732.8" font-size="12" fill="#6a6a6a" font-weight="bold" text-anchor="middle" letter-spacing="0.2" >dB</text>
<line x1="689" y1="479.3" x2="699.2" y2="479.3" stroke="#555" stroke-width="1.5"/>
<rect x="661" y="467.8" width="30" height="26" rx="4" fill="#000" opacity="0.15" filter="url(#blur1)"/>
<rect x="661" y="467.3" width="28" height="24" rx="3.5" fill="url(#btnG)" stroke="#555" stroke-width="2"/>
<circle cx="706.2" cy="479.3" r="7.5" fill="url(#ledOn)" stroke="#4e1a18" stroke-width="1.6"/>
<circle cx="706.2" cy="479.3" r="5.5" fill="none" stroke="#ffffff" stroke-opacity="0.18" stroke-width="0.8"/>
<line x1="689" y1="529.8" x2="699.2" y2="529.8" stroke="#555" stroke-width="1.5"/>
<rect x="661" y="518.7" width="30" height="26" rx="4" fill="#000" opacity="0.15" filter="url(#blur1)"/>
<rect x="661" y="518.2" width="28" height="24" rx="3.5" fill="url(#btnG)" stroke="#555" stroke-width="2"/>
<circle cx="706.2" cy="529.8" r="7.5" fill="url(#ledOff)" stroke="#2e0e0e" stroke-width="1.6"/>
<circle cx="706.2" cy="529.8" r="5.5" fill="none" stroke="#ffffff" stroke-opacity="0.18" stroke-width="0.8"/>
<line x1="689" y1="580.2" x2="699.2" y2="580.2" stroke="#555" stroke-width="1.5"/>
<rect x="661" y="569.3" width="30" height="26" rx="4" fill="#000" opacity="0.15" filter="url(#blur1)"/>
<rect x="661" y="568.8" width="28" height="24" rx="3.5" fill="url(#btnG)" stroke="#555" stroke-width="2"/>
<circle cx="706.2" cy="580.2" r="7.5" fill="url(#ledOff)" stroke="#2e0e0e" stroke-width="1.6"/>
<circle cx="706.2" cy="580.2" r="5.5" fill="none" stroke="#ffffff" stroke-opacity="0.18" stroke-width="0.8"/>
<line x1="689" y1="685.2" x2="699.1" y2="685.2" stroke="#555" stroke-width="1.5"/>
<rect x="661" y="674.1" width="30" height="26" rx="4" fill="#000" opacity="0.15" filter="url(#blur1)"/>
<rect x="661" y="673.6" width="28" height="24" rx="3.5" fill="url(#btnG)" stroke="#555" stroke-width="2"/>
<circle cx="706.1" cy="685.2" r="7.5" fill="url(#ledOff)" stroke="#2e0e0e" stroke-width="1.6"/>
<circle cx="706.1" cy="685.2" r="5.5" fill="none" stroke="#ffffff" stroke-opacity="0.18" stroke-width="0.8"/>
<text x="673.1" y="508.7" font-size="13" fill="#565656" font-weight="bold" text-anchor="middle" letter-spacing="0.3" >OFF</text>
<text x="674.7" y="560.2" font-size="13" fill="#565656" font-weight="bold" text-anchor="middle" letter-spacing="0.3" >0 dB</text>
<text x="677.2" y="610.5" font-size="13" fill="#565656" font-weight="bold" text-anchor="middle" letter-spacing="0.3" >-12 dB</text>
<text x="677.9" y="715.8" font-size="13" fill="#565656" font-weight="bold" text-anchor="middle" letter-spacing="0.3" >AUTO</text>
<line x1="838.5" y1="231.6" x2="848.6" y2="231.6" stroke="#555" stroke-width="1.5"/>
<rect x="810.5" y="220.2" width="30" height="26" rx="4" fill="#000" opacity="0.15" filter="url(#blur1)"/>
<rect x="810.5" y="219.7" width="28" height="24" rx="3.5" fill="url(#btnG)" stroke="#555" stroke-width="2"/>
<circle cx="855.6" cy="231.6" r="7.5" fill="url(#ledOff)" stroke="#2e0e0e" stroke-width="1.6"/>
<circle cx="855.6" cy="231.6" r="5.5" fill="none" stroke="#ffffff" stroke-opacity="0.18" stroke-width="0.8"/>
<circle cx="877.4" cy="189.8" r="6.6" fill="url(#ledDark)" stroke="#1e0a0a" stroke-width="1.4"/>
<rect x="144" y="181.2" width="595.4" height="232.2" fill="url(#dispG)"/>
<rect x="163.6" y="200.8" width="556.2" height="192" fill="#212121" stroke="#151515" stroke-width="1"/>
<rect x="320.5" y="211" width="244" height="28" rx="2.5" fill="#262626" stroke="#7a7a7a" stroke-width="1.5"/>
<path d="M323 211.75 H443.6 V238.25 H323 A2 2 0 0 1 321.25 236.5 V213.5 A2 2 0 0 1 323 211.75Z" fill="#6e6e6e"/>
<text x="381.6" y="231.2" font-size="19.5" fill="#1e1e1e" font-weight="normal" text-anchor="middle" letter-spacing="0.6" >Meter</text>
<text x="503.6" y="231.2" font-size="19" fill="#8e8e8e" font-weight="normal" text-anchor="middle" letter-spacing="0" >Graph</text>
<line x1="244.4" y1="343" x2="266.9" y2="363.3" stroke="#8a8a8a" stroke-width="1.6"/>
<line x1="311.7" y1="313.5" x2="327.3" y2="337.4" stroke="#8a8a8a" stroke-width="1.6"/>
<line x1="377" y1="297.6" x2="384.6" y2="323.1" stroke="#8a8a8a" stroke-width="1.6"/>
<line x1="440.6" y1="292.8" x2="441.1" y2="318.7" stroke="#8a8a8a" stroke-width="1.6"/>
<line x1="459.2" y1="292.8" x2="457.2" y2="319.4" stroke="#8a8a8a" stroke-width="1.6"/>
<line x1="478.8" y1="294.5" x2="474.1" y2="321" stroke="#8a8a8a" stroke-width="1.6"/>
<line x1="498" y1="296" x2="491.4" y2="322.7" stroke="#8a8a8a" stroke-width="1.6"/>
<line x1="517.3" y1="300.4" x2="508.3" y2="325" stroke="#8a8a8a" stroke-width="1.6"/>
<line x1="536.2" y1="305" x2="525.6" y2="329.3" stroke="#8a8a8a" stroke-width="1.6"/>
<line x1="556.1" y1="310.4" x2="542.8" y2="334.3" stroke="#8a8a8a" stroke-width="1.6"/>
<line x1="575.4" y1="316" x2="560.1" y2="340" stroke="#8a8a8a" stroke-width="1.6"/>
<line x1="596" y1="323.7" x2="577.7" y2="346.6" stroke="#8a8a8a" stroke-width="1.6"/>
<line x1="615.9" y1="332.6" x2="596" y2="354.2" stroke="#8a8a8a" stroke-width="1.6"/>
<text x="228.8" y="331.8" font-size="19.5" fill="#8c8c8c" font-weight="normal" text-anchor="middle" letter-spacing="0" >-50</text>
<text x="300.1" y="302.3" font-size="19.5" fill="#8c8c8c" font-weight="normal" text-anchor="middle" letter-spacing="0" >-30</text>
<text x="369.4" y="287.0" font-size="19.5" fill="#8c8c8c" font-weight="normal" text-anchor="middle" letter-spacing="0" >-20</text>
<text x="436.6" y="279.9" font-size="19.5" fill="#8c8c8c" font-weight="normal" text-anchor="middle" letter-spacing="0" >-10</text>
<text x="539.5" y="291.5" font-size="19.5" fill="#8c8c8c" font-weight="normal" text-anchor="middle" letter-spacing="0" >-5</text>
<text x="647.8" y="334.7" font-size="19.5" fill="#8c8c8c" font-weight="normal" text-anchor="middle" letter-spacing="0" >0</text>
<line x1="636.4" y1="343.8" x2="629.2" y2="350" stroke="#b0b0b0" stroke-width="1.5"/>
<line x1="629.6" y1="349.6" x2="591" y2="385.4" stroke="#f4f4f4" stroke-width="2.1"/>
<polygon points="590.5,383.2 594.2,386.4 588.6,392 580.8,392" fill="#f0f0f0"/></svg>
</body></html>
